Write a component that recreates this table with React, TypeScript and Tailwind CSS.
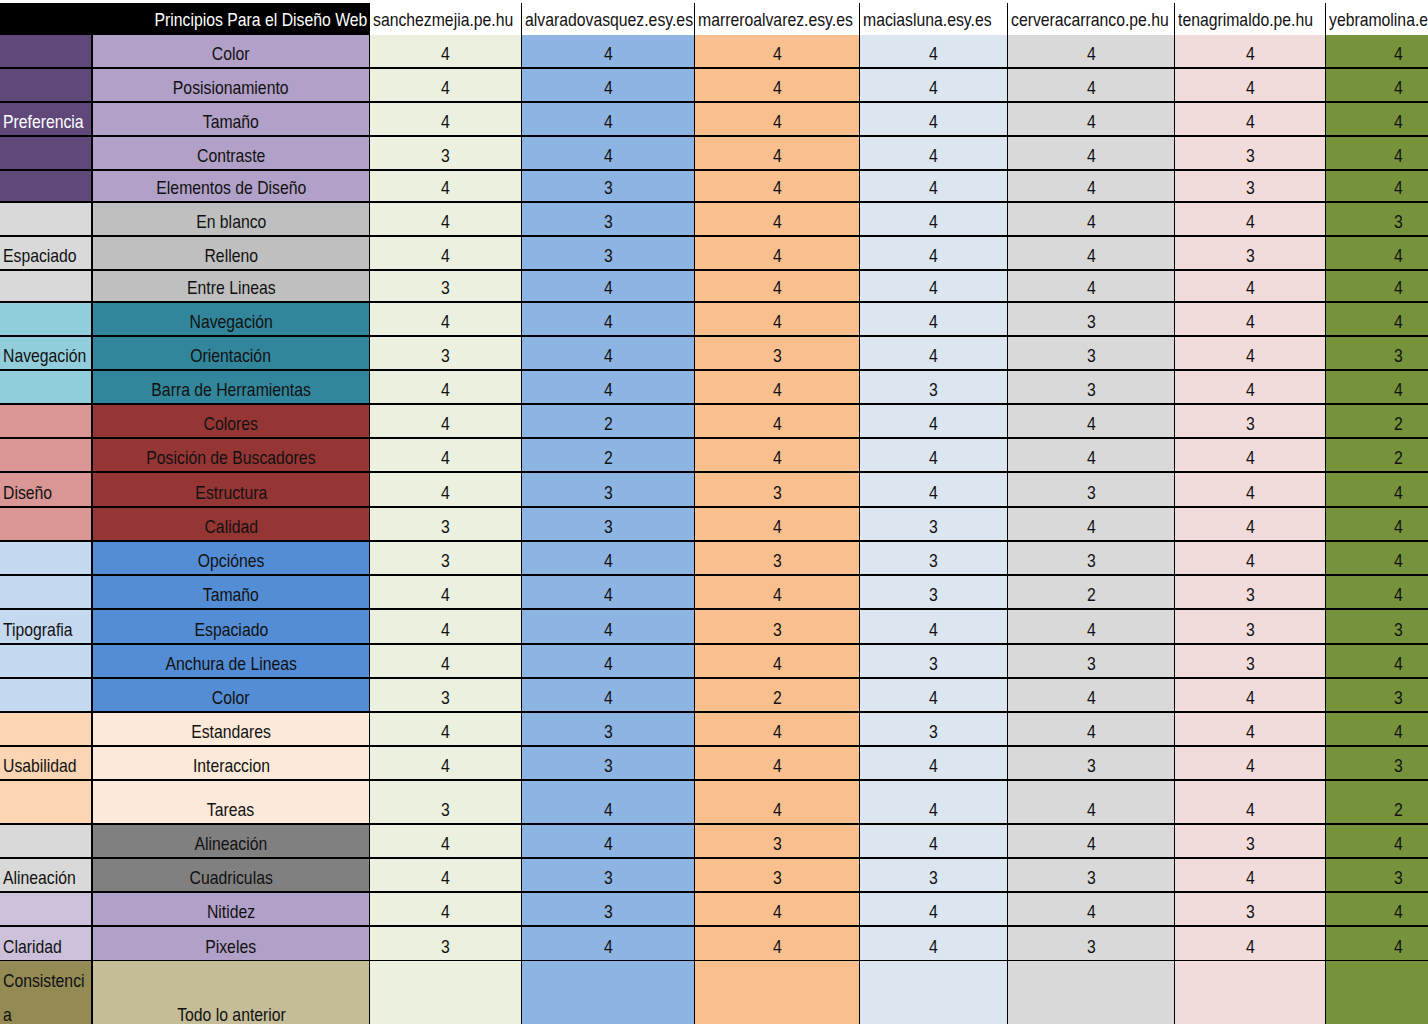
import React from "react";

type DataCol = { name: string; w: string; bg: string };

const dataCols: DataCol[] = [
  { name: "sanchezmejia.pe.hu", w: "w-[152px]", bg: "bg-[#ebf1de]" },
  { name: "alvaradovasquez.esy.es", w: "w-[173px]", bg: "bg-[#8db4e2]" },
  { name: "marreroalvarez.esy.es", w: "w-[165px]", bg: "bg-[#fabf8f]" },
  { name: "maciasluna.esy.es", w: "w-[148px]", bg: "bg-[#dce6f1]" },
  { name: "cerveracarranco.pe.hu", w: "w-[167px]", bg: "bg-[#d9d9d9]" },
  { name: "tenagrimaldo.pe.hu", w: "w-[151px]", bg: "bg-[#f2dcdb]" },
  { name: "yebramolina.esy.es", w: "w-[145px]", bg: "bg-[#76933c]" },
];

type Row = {
  item: string;
  vals: number[];
  h: string;
  g0: string;
  g1: string;
  label?: string;
  labelWhite?: boolean;
  border: string;
};

const P0 = "bg-[#60497a]";
const P1 = "bg-[#b1a0c7]";
const E0 = "bg-[#d9d9d9]";
const E1 = "bg-[#bfbfbf]";
const N0 = "bg-[#92cddc]";
const N1 = "bg-[#31869b]";
const D0 = "bg-[#da9694]";
const D1 = "bg-[#963634]";
const T0 = "bg-[#c5d9f1]";
const T1 = "bg-[#538dd5]";
const U0 = "bg-[#fcd5b4]";
const U1 = "bg-[#fde9d9]";
const A0 = "bg-[#d9d9d9]";
const A1 = "bg-[#808080]";
const C0 = "bg-[#ccc0da]";
const C1 = "bg-[#b1a0c7]";

const B2 = "border-b-2";

const rows: Row[] = [
  { item: "Color", vals: [4, 4, 4, 4, 4, 4, 4], h: "h-[34px]", g0: P0, g1: P1, border: B2 },
  { item: "Posisionamiento", vals: [4, 4, 4, 4, 4, 4, 4], h: "h-[34px]", g0: P0, g1: P1, border: B2 },
  { item: "Tamaño", vals: [4, 4, 4, 4, 4, 4, 4], h: "h-[34px]", g0: P0, g1: P1, label: "Preferencia", labelWhite: true, border: B2 },
  { item: "Contraste", vals: [3, 4, 4, 4, 4, 3, 4], h: "h-[34px]", g0: P0, g1: P1, border: B2 },
  { item: "Elementos de Diseño", vals: [4, 3, 4, 4, 4, 3, 4], h: "h-[32px]", g0: P0, g1: P1, border: B2 },
  { item: "En blanco", vals: [4, 3, 4, 4, 4, 4, 3], h: "h-[34px]", g0: E0, g1: E1, border: B2 },
  { item: "Relleno", vals: [4, 3, 4, 4, 4, 3, 4], h: "h-[34px]", g0: E0, g1: E1, label: "Espaciado", border: B2 },
  { item: "Entre Lineas", vals: [3, 4, 4, 4, 4, 4, 4], h: "h-[32px]", g0: E0, g1: E1, border: B2 },
  { item: "Navegación", vals: [4, 4, 4, 4, 3, 4, 4], h: "h-[34px]", g0: N0, g1: N1, border: B2 },
  { item: "Orientación", vals: [3, 4, 3, 4, 3, 4, 3], h: "h-[34px]", g0: N0, g1: N1, label: "Navegación", border: B2 },
  { item: "Barra de Herramientas", vals: [4, 4, 4, 3, 3, 4, 4], h: "h-[34px]", g0: N0, g1: N1, border: B2 },
  { item: "Colores", vals: [4, 2, 4, 4, 4, 3, 2], h: "h-[34px]", g0: D0, g1: D1, border: B2 },
  { item: "Posición de Buscadores", vals: [4, 2, 4, 4, 4, 4, 2], h: "h-[34px]", g0: D0, g1: D1, border: B2 },
  { item: "Estructura", vals: [4, 3, 3, 4, 3, 4, 4], h: "h-[35px]", g0: D0, g1: D1, label: "Diseño", border: B2 },
  { item: "Calidad", vals: [3, 3, 4, 3, 4, 4, 4], h: "h-[34px]", g0: D0, g1: D1, border: B2 },
  { item: "Opciónes", vals: [3, 4, 3, 3, 3, 4, 4], h: "h-[34px]", g0: T0, g1: T1, border: B2 },
  { item: "Tamaño", vals: [4, 4, 4, 3, 2, 3, 4], h: "h-[34px]", g0: T0, g1: T1, border: B2 },
  { item: "Espaciado", vals: [4, 4, 3, 4, 4, 3, 3], h: "h-[35px]", g0: T0, g1: T1, label: "Tipografia", border: B2 },
  { item: "Anchura de Lineas", vals: [4, 4, 4, 3, 3, 3, 4], h: "h-[34px]", g0: T0, g1: T1, border: B2 },
  { item: "Color", vals: [3, 4, 2, 4, 4, 4, 3], h: "h-[34px]", g0: T0, g1: T1, border: B2 },
  { item: "Estandares", vals: [4, 3, 4, 3, 4, 4, 4], h: "h-[34px]", g0: U0, g1: U1, border: B2 },
  { item: "Interaccion", vals: [4, 3, 4, 4, 3, 4, 3], h: "h-[34px]", g0: U0, g1: U1, label: "Usabilidad", border: B2 },
  { item: "Tareas", vals: [3, 4, 4, 4, 4, 4, 2], h: "h-[44px]", g0: U0, g1: U1, border: B2 },
  { item: "Alineación", vals: [4, 4, 3, 4, 4, 3, 4], h: "h-[34px]", g0: A0, g1: A1, border: B2 },
  { item: "Cuadriculas", vals: [4, 3, 3, 3, 3, 4, 3], h: "h-[34px]", g0: A0, g1: A1, label: "Alineación", border: B2 },
  { item: "Nitidez", vals: [4, 3, 4, 4, 4, 3, 4], h: "h-[34px]", g0: C0, g1: C1, border: B2 },
  { item: "Pixeles", vals: [3, 4, 4, 4, 3, 4, 4], h: "h-[34px]", g0: C0, g1: C1, label: "Claridad", border: "border-b" },
];

const cellBase = "h-full flex items-end overflow-hidden whitespace-nowrap pb-[2px] leading-[22px]";

function TL({ children }: { children: React.ReactNode }) {
  return <span className="inline-block shrink-0 scale-x-[0.83] origin-left">{children}</span>;
}
function TC({ children }: { children: React.ReactNode }) {
  return <span className="inline-block shrink-0 scale-x-[0.83] origin-center">{children}</span>;
}
function TR({ children }: { children: React.ReactNode }) {
  return <span className="inline-block shrink-0 scale-x-[0.83] origin-right">{children}</span>;
}

export default function App() {
  return (
    <div className="w-[1428px] h-[1024px] overflow-hidden bg-white pt-[3px] font-['Liberation_Sans',Arial,sans-serif] text-[19px] text-[#111]">
      <div className="w-[1471px]">
        {/* header */}
        <div className="flex h-[32px]">
          <div className="w-[370px] h-full bg-black text-white flex items-end justify-end pr-[3px] pb-[4px] leading-[22px] whitespace-nowrap overflow-hidden">
            <TR>Principios Para el Diseño Web</TR>
          </div>
          {dataCols.map((c, i) => (
            <div
              key={c.name}
              className={`${c.w} h-full flex items-end pl-[3px] pb-[4px] leading-[22px] whitespace-nowrap overflow-hidden bg-white ${
                i < dataCols.length - 1 ? "border-r border-black" : ""
              }`}
            >
              <TL>{c.name}</TL>
            </div>
          ))}
        </div>

        {rows.map((r, ri) => (
          <div key={ri} className={`flex ${r.h} ${r.border} border-black`}>
            <div className={`w-[93px] ${r.g0} border-r-2 border-black ${cellBase} pl-[3px] ${r.labelWhite ? "text-white" : ""}`}>
              {r.label ? <TL>{r.label}</TL> : null}
            </div>
            <div className={`w-[277px] ${r.g1} border-r border-black ${cellBase} justify-center`}>
              <TC>{r.item}</TC>
            </div>
            {dataCols.map((c, ci) => (
              <div
                key={ci}
                className={`${c.w} ${c.bg} ${cellBase} justify-center ${ci < dataCols.length - 1 ? "border-r border-black" : ""}`}
              >
                <TC>{r.vals[ci]}</TC>
              </div>
            ))}
          </div>
        ))}

        {/* last row */}
        <div className="flex h-[70px]">
          <div className="w-[93px] h-full bg-[#948a54] border-r-2 border-black flex flex-col justify-between items-start pl-[3px] pt-[9px] pb-[5px] leading-[22px] overflow-hidden whitespace-nowrap">
            <TL>Consistenci</TL>
            <TL>a</TL>
          </div>
          <div className={`w-[277px] bg-[#c4bd97] border-r border-black ${cellBase} pb-[5px] justify-center`}>
            <TC>Todo lo anterior</TC>
          </div>
          {dataCols.map((c, ci) => (
            <div key={ci} className={`${c.w} h-full ${c.bg} ${ci < dataCols.length - 1 ? "border-r border-black" : ""}`} />
          ))}
        </div>
      </div>
    </div>
  );
}
